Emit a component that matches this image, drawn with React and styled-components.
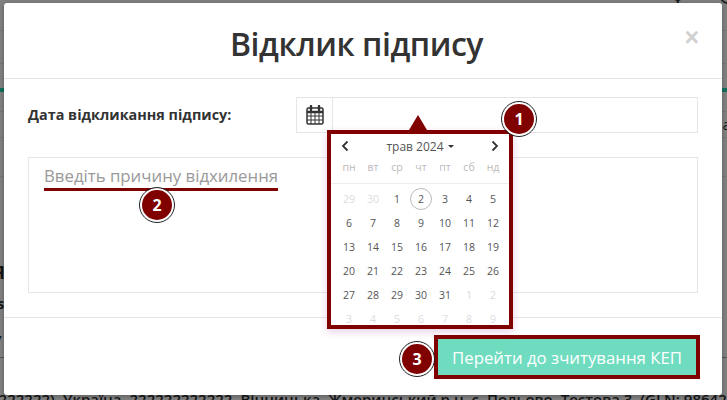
import React from 'react';
import styled, { createGlobalStyle } from 'styled-components';

const GlobalStyle = createGlobalStyle`
  html, body {
    margin: 0;
    padding: 0;
    height: 100%;
    overflow: hidden;
    font-family: 'Open Sans', 'Liberation Sans', sans-serif;
  }
`;

const MAROON = '#800000';

const Page = styled.div`
  position: relative;
  width: 727px;
  height: 400px;
  overflow: hidden;
  background: #808080;
  padding: 3px 5px 0 4px;
  box-sizing: border-box;
`;

// page behind the backdrop, only its edges are visible round the modal
const BehindPage = styled.div`
  position: absolute;
  inset: 0;
  display: flex;
  flex-direction: column;
`;

const BehindRow = styled.div`
  flex: none;
  height: ${(p) => p.$h}px;
  box-sizing: border-box;
  border-bottom: ${(p) => p.$line || '1px solid #767676'};
  display: flex;
  align-items: center;
  justify-content: ${(p) => p.$justify || 'flex-start'};
  font-size: 14px;
  color: #151515;
  white-space: nowrap;
`;

const LeftCut = styled.span`
  margin-left: -7px;
  font-size: ${(p) => p.$size || 14}px;
  font-weight: 700;
`;

const RightCut = styled.span`
  margin-right: -10px;
`;

const TopCrumb = styled.span`
  align-self: flex-start;
  margin: -14px 0 0 672px;
  font-weight: 700;
`;

const TopRing = styled.span`
  align-self: flex-start;
  margin: -11px -8px 0 auto;
  width: 11px;
  height: 11px;
  border: 2px solid #222;
  border-radius: 50%;
`;

const BottomText = styled.div`
  margin: 33px 0 0 -10px;
  font-size: 15px;
  font-weight: 600;
  line-height: 16px;
  color: #151515;
  white-space: nowrap;
`;

const Modal = styled.div`
  position: relative;
  width: 718px;
  height: 392px;
  background: #fff;
  border-radius: 3px;
  box-shadow: 0 1px 4px rgba(0, 0, 0, 0.3);
  display: flex;
  flex-direction: column;
`;

const Header = styled.header`
  position: relative;
  height: 76px;
  padding: 6px 13px 0 0;
  box-sizing: border-box;
  border-bottom: 1px solid #e5e5e5;
  display: flex;
  align-items: center;
  justify-content: center;
`;

const Title = styled.h4`
  margin: 0;
  font-size: 32px;
  font-weight: 600;
  letter-spacing: -0.45px;
  line-height: 40px;
  color: #333;
`;

const Close = styled.span`
  position: absolute;
  right: 23px;
  top: 20px;
  font-size: 25px;
  line-height: 28px;
  font-weight: 700;
  color: #d0d0d0;
  font-family: 'Liberation Sans', sans-serif;
`;

const Body = styled.div`
  height: 239px;
  padding: 18px 24px 0;
  box-sizing: border-box;
  border-bottom: 1px solid #e5e5e5;
  display: flex;
  flex-direction: column;
  gap: 24px;
`;

const DateRow = styled.div`
  display: flex;
  align-items: center;
`;

const DateLabel = styled.label`
  width: 268px;
  margin-bottom: 2px;
  font-size: 14.4px;
  font-weight: 700;
  color: #333;
`;

const InputGroup = styled.div`
  flex: 1;
  display: flex;
  height: 36px;
  border: 1px solid #e5e6e7;
  box-sizing: border-box;
`;

const Addon = styled.div`
  width: 35px;
  border-right: 1px solid #e5e6e7;
  display: flex;
  align-items: center;
  justify-content: center;
`;

const ReasonBox = styled.div`
  height: 136px;
  border: 1px solid #e5e6e7;
  box-sizing: border-box;
  padding: 6px 15px;
`;

const Placeholder = styled.span`
  display: inline-block;
  font-size: 16.8px;
  line-height: 24px;
  color: #999;
  border-bottom: 3px solid ${MAROON};
`;

const Footer = styled.footer`
  flex: 1;
  display: flex;
  justify-content: flex-end;
  align-items: flex-start;
  padding: 17px 22px 0 0;
`;

const SubmitButton = styled.button`
  width: 266px;
  height: 44px;
  border: 4px solid ${MAROON};
  background: #6fdcc0;
  color: #fff;
  font-family: inherit;
  font-size: 16.8px;
  padding: 0;
`;

const Picker = styled.div`
  position: absolute;
  left: 323px;
  top: 127px;
  width: 186px;
  height: 199px;
  box-sizing: border-box;
  border: 4px solid ${MAROON};
  background: #fff;
  box-shadow: 0 3px 8px rgba(128, 0, 128, 0.18);
  padding: 0 6px;
  &::before {
    content: '';
    position: absolute;
    left: 78px;
    top: -19px;
    border-left: 9px solid transparent;
    border-right: 9px solid transparent;
    border-bottom: 15px solid ${MAROON};
  }
`;

const PickerHead = styled.div`
  height: 24px;
  margin: 0 -4px;
  display: grid;
  grid-template-columns: 24px 1fr 24px;
  align-items: center;
  justify-items: center;
  font-size: 12px;
  color: #555;
`;

const Month = styled.span`
  display: flex;
  align-items: center;
  gap: 4px;
  &::after {
    content: '';
    border-left: 3.5px solid transparent;
    border-right: 3.5px solid transparent;
    border-top: 3.5px solid #333;
  }
`;

const WeekDays = styled.div`
  display: grid;
  grid-template-columns: repeat(7, 24px);
  height: 25px;
  border-bottom: 1px solid #eee;
  margin: 0 -6px;
  padding: 0 6px;
  font-size: 10.5px;
  color: #bbb;
  text-align: center;
  line-height: 19px;
`;

const Days = styled.div`
  display: grid;
  grid-template-columns: repeat(7, 24px);
  grid-auto-rows: 24px;
  padding-top: 3px;
`;

const Day = styled.div`
  display: flex;
  align-items: center;
  justify-content: center;
  font-size: 10.5px;
  color: ${(p) => (p.$muted ? '#dcdcdc' : '#555')};
  border-radius: 50%;
  border: 1px solid ${(p) => (p.$today ? '#bbb' : 'transparent')};
  box-sizing: border-box;
  margin: 1px;
`;

const Badge = styled.div`
  position: absolute;
  left: ${(p) => p.$x - 17}px;
  top: ${(p) => p.$y - 17}px;
  width: 34px;
  height: 34px;
  box-sizing: border-box;
  border-radius: 50%;
  background: ${MAROON};
  border: 2px solid #fff;
  outline: 1px solid #222;
  display: flex;
  align-items: center;
  justify-content: center;
  color: #fff;
  font-size: 16px;
  font-weight: 700;
`;

const weekDays = ['пн', 'вт', 'ср', 'чт', 'пт', 'сб', 'нд'];

const buildDays = () => {
  const days = [
    { n: 29, muted: true },
    { n: 30, muted: true },
  ];
  for (let n = 1; n <= 31; n++) days.push({ n, today: n === 2 });
  for (let n = 1; n <= 9; n++) days.push({ n, muted: true });
  return days;
};

function CalendarIcon() {
  return (
    <svg width="18" height="20" viewBox="0 0 18 20" fill="none" stroke="#333">
      <rect x="1" y="3" width="16" height="16" rx="1.5" strokeWidth="1.5" />
      <path d="M1 7h16" strokeWidth="2.5" />
      <path d="M1 11h16M1 15h16M5 8v11M9 8v11M13 8v11" strokeWidth="1" />
      <path d="M5 1v4M13 1v4" strokeWidth="2.4" strokeLinecap="round" />
    </svg>
  );
}

function Chevron({ dir }) {
  return (
    <svg width="8" height="12" viewBox="0 0 8 12" fill="none" stroke="#333" strokeWidth="1.8">
      <path d={dir === 'left' ? 'M6.5 1.5 2 6l4.5 4.5' : 'M1.5 1.5 6 6l-4.5 4.5'} />
    </svg>
  );
}

export default function App() {
  return (
    <Page>
      <GlobalStyle />
      <BehindPage>
        <BehindRow $h={31}>
          <TopCrumb>ф</TopCrumb>
          <TopRing />
        </BehindRow>
        <BehindRow $h={33} />
        <BehindRow $h={28} $line="4px solid #0f6f5c" />
        <BehindRow $h={20} />
        <BehindRow $h={26} $justify="flex-end">
          <RightCut>ат</RightCut>
        </BehindRow>
        <BehindRow $h={39} />
        <BehindRow $h={80} $line="none" />
        <BehindRow $h={30} $line="none">
          <LeftCut $size={18}>Я</LeftCut>
        </BehindRow>
        <BehindRow $h={32} $line="none">
          <LeftCut>ls</LeftCut>
        </BehindRow>
        <BehindRow $h={39} $line="1px solid #555">
          <LeftCut $size={15}>у</LeftCut>
        </BehindRow>
        <BottomText>
          2222222), Україна, 222222222222, Вінницька, Жмеринський р.н, с. Польово, Тестова 3, (GLN: 9864232
        </BottomText>
      </BehindPage>

      <Modal>
        <Header>
          <Title>Відклик підпису</Title>
          <Close>×</Close>
        </Header>
        <Body>
          <DateRow>
            <DateLabel>Дата відкликання підпису:</DateLabel>
            <InputGroup>
              <Addon>
                <CalendarIcon />
              </Addon>
            </InputGroup>
          </DateRow>
          <ReasonBox>
            <Placeholder>Введіть причину відхилення</Placeholder>
          </ReasonBox>
        </Body>
        <Footer>
          <SubmitButton>Перейти до зчитування КЕП</SubmitButton>
        </Footer>

        <Picker>
          <PickerHead>
            <Chevron dir="left" />
            <Month>трав 2024</Month>
            <Chevron dir="right" />
          </PickerHead>
          <WeekDays>
            {weekDays.map((d) => (
              <span key={d}>{d}</span>
            ))}
          </WeekDays>
          <Days>
            {buildDays().map((d, i) => (
              <Day key={i} $muted={d.muted} $today={d.today}>
                {d.n}
              </Day>
            ))}
          </Days>
        </Picker>
      </Modal>

      <Badge $x={519} $y={119}>1</Badge>
      <Badge $x={157} $y={205}>2</Badge>
      <Badge $x={417} $y={359}>3</Badge>
    </Page>
  );
}
